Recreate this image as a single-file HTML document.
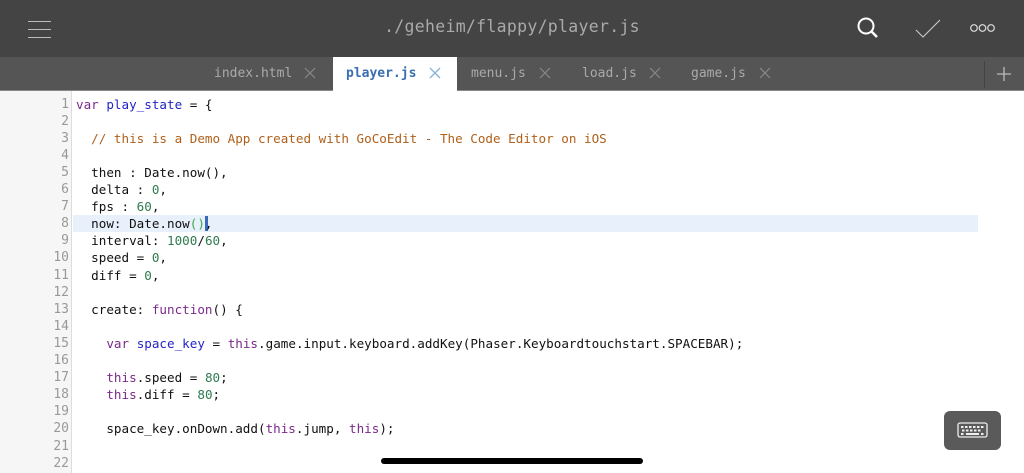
<!DOCTYPE html><html><head><style>
*{margin:0;padding:0;box-sizing:border-box}
body{width:1024px;height:473px;overflow:hidden;background:#fff;position:relative;font-family:"DejaVu Sans Mono","Liberation Mono",monospace}
#top{position:absolute;left:0;top:0;width:1024px;height:57px;background:#444}
#title{position:absolute;left:0;width:1024px;top:17px;text-align:center;color:#aaa;font-size:16.5px;letter-spacing:0.3px}
#tabs{position:absolute;left:0;top:57px;width:1024px;height:34px;background:#555;border-bottom:1px solid #888}
.tab{position:absolute;top:0;height:34px;line-height:33px;color:#aaa;font-size:13px}
.x{position:absolute;top:10px;width:12px;height:12px}
#gut{position:absolute;left:0;top:91px;width:72px;height:382px;background:#f6f6f6;border-right:1px solid #ddd}
.ln{position:absolute;left:0;width:69px;text-align:right;color:#999;font-size:13px;height:17.1px;line-height:17.1px}
.cl{position:absolute;left:76px;font-size:12.6px;height:17.1px;line-height:17.1px;white-space:pre;color:#111}
.k{color:#7a2a8a}.v{color:#2424c8}.c{color:#b0601a}.n{color:#2e7a4e}.p{color:#3aa84a}
</style></head><body>
<div id="top">
<div style="position:absolute;left:28px;top:21px;width:23px;height:1px;background:#bbb"></div>
<div style="position:absolute;left:28px;top:29px;width:23px;height:1px;background:#bbb"></div>
<div style="position:absolute;left:28px;top:37px;width:23px;height:1px;background:#bbb"></div>
<div id="title">./geheim/flappy/player.js</div>
<svg style="position:absolute;left:856px;top:16px" width="26" height="24"><circle cx="10" cy="10" r="7.5" fill="none" stroke="#fff" stroke-width="2"/><line x1="15.5" y1="15.5" x2="21" y2="21" stroke="#fff" stroke-width="2.5"/></svg>
<svg style="position:absolute;left:914px;top:18px" width="30" height="22"><polyline points="2,12 9,19 26,2" fill="none" stroke="#ccc" stroke-width="1.1"/></svg>
<svg style="position:absolute;left:968px;top:22px" width="30" height="12"><circle cx="6" cy="6" r="3.3" fill="none" stroke="#ddd" stroke-width="1.2"/><circle cx="14.5" cy="6" r="3.3" fill="none" stroke="#ddd" stroke-width="1.2"/><circle cx="23" cy="6" r="3.3" fill="none" stroke="#ddd" stroke-width="1.2"/></svg>
</div>
<div id="tabs">
<div class="tab" style="left:214px">index.html</div>
<svg class="x" style="left:304px"><path d="M1 1L11 11M11 1L1 11" stroke="#888" stroke-width="1.2"/></svg>
<div class="tab" style="left:333px;width:124px;background:#fff;top:0;height:35px"></div>
<div class="tab" style="left:346px;color:#3a6fb0;font-weight:bold">player.js</div>
<svg class="x" style="left:429px"><path d="M1 1L11 11M11 1L1 11" stroke="#8ab4d8" stroke-width="1.4"/></svg>
<div class="tab" style="left:471px">menu.js</div>
<svg class="x" style="left:539px"><path d="M1 1L11 11M11 1L1 11" stroke="#888" stroke-width="1.2"/></svg>
<div class="tab" style="left:582px">load.js</div>
<svg class="x" style="left:649px"><path d="M1 1L11 11M11 1L1 11" stroke="#888" stroke-width="1.2"/></svg>
<div class="tab" style="left:691px">game.js</div>
<svg class="x" style="left:759px"><path d="M1 1L11 11M11 1L1 11" stroke="#888" stroke-width="1.2"/></svg>
<div style="position:absolute;left:984px;top:4px;width:1px;height:27px;background:#444"></div>
<svg style="position:absolute;left:997px;top:10px" width="14" height="14"><path d="M7 0V14M0 7H14" stroke="#bbb" stroke-width="1.3"/></svg>
</div>
<div id="gut"></div>
<div style="position:absolute;left:73px;top:215.2px;width:905px;height:17.1px;background:#e8f0fb"></div>
<div style="position:absolute;left:205px;top:216px;width:3px;height:15px;background:#3b68b8"></div>
<div id="code">
<div class="ln" style="top:95.5px">1</div><div class="cl" style="top:95.5px"><span class="k">var</span> <span class="v">play_state</span> = {</div>
<div class="ln" style="top:112.6px">2</div>
<div class="ln" style="top:129.7px">3</div><div class="cl c" style="top:129.7px">  // this is a Demo App created with GoCoEdit - The Code Editor on iOS</div>
<div class="ln" style="top:146.8px">4</div>
<div class="ln" style="top:163.9px">5</div><div class="cl" style="top:163.9px">  then : Date.now(),</div>
<div class="ln" style="top:181px">6</div><div class="cl" style="top:181px">  delta : <span class="n">0</span>,</div>
<div class="ln" style="top:198.1px">7</div><div class="cl" style="top:198.1px">  fps : <span class="n">60</span>,</div>
<div class="ln" style="top:215.2px">8</div><div class="cl" style="top:215.2px">  now: Date.now<span class="p">()</span>,</div>
<div class="ln" style="top:232.3px">9</div><div class="cl" style="top:232.3px">  interval: <span class="n">1000</span>/<span class="n">60</span>,</div>
<div class="ln" style="top:249.4px">10</div><div class="cl" style="top:249.4px">  speed = <span class="n">0</span>,</div>
<div class="ln" style="top:266.5px">11</div><div class="cl" style="top:266.5px">  diff = <span class="n">0</span>,</div>
<div class="ln" style="top:283.6px">12</div>
<div class="ln" style="top:300.7px">13</div><div class="cl" style="top:300.7px">  create: <span class="k">function</span>() {</div>
<div class="ln" style="top:317.8px">14</div>
<div class="ln" style="top:334.9px">15</div><div class="cl" style="top:334.9px">    <span class="k">var</span> <span class="v">space_key</span> = <span class="k">this</span>.game.input.keyboard.addKey(Phaser.Keyboardtouchstart.SPACEBAR);</div>
<div class="ln" style="top:352px">16</div>
<div class="ln" style="top:369.1px">17</div><div class="cl" style="top:369.1px">    <span class="k">this</span>.speed = <span class="n">80</span>;</div>
<div class="ln" style="top:386.2px">18</div><div class="cl" style="top:386.2px">    <span class="k">this</span>.diff = <span class="n">80</span>;</div>
<div class="ln" style="top:403.3px">19</div>
<div class="ln" style="top:420.4px">20</div><div class="cl" style="top:420.4px">    space_key.onDown.add(<span class="k">this</span>.jump, <span class="k">this</span>);</div>
<div class="ln" style="top:437.5px">21</div>
<div class="ln" style="top:454.6px">22</div>
</div>
<div style="position:absolute;left:944px;top:411px;width:57px;height:39px;background:#5a5a5a;border-radius:6px"></div>
<svg style="position:absolute;left:957px;top:421px" width="32" height="18"><rect x="1" y="2" width="29" height="14" rx="2" fill="none" stroke="#eee" stroke-width="1.3"/><g fill="#eee"><rect x="4" y="5" width="2.5" height="2"/><rect x="8" y="5" width="2.5" height="2"/><rect x="12" y="5" width="2.5" height="2"/><rect x="16" y="5" width="2.5" height="2"/><rect x="20" y="5" width="2.5" height="2"/><rect x="24" y="5" width="2.5" height="2"/><rect x="5" y="8.5" width="2.5" height="2"/><rect x="9" y="8.5" width="2.5" height="2"/><rect x="13" y="8.5" width="2.5" height="2"/><rect x="17" y="8.5" width="2.5" height="2"/><rect x="21" y="8.5" width="2.5" height="2"/><rect x="4" y="12" width="2.5" height="2"/><rect x="9" y="12" width="13" height="2"/><rect x="24" y="12" width="2.5" height="2"/></g></svg>
<div style="position:absolute;left:381px;top:458px;width:262px;height:6px;border-radius:3px;background:#000"></div>
</body></html>
